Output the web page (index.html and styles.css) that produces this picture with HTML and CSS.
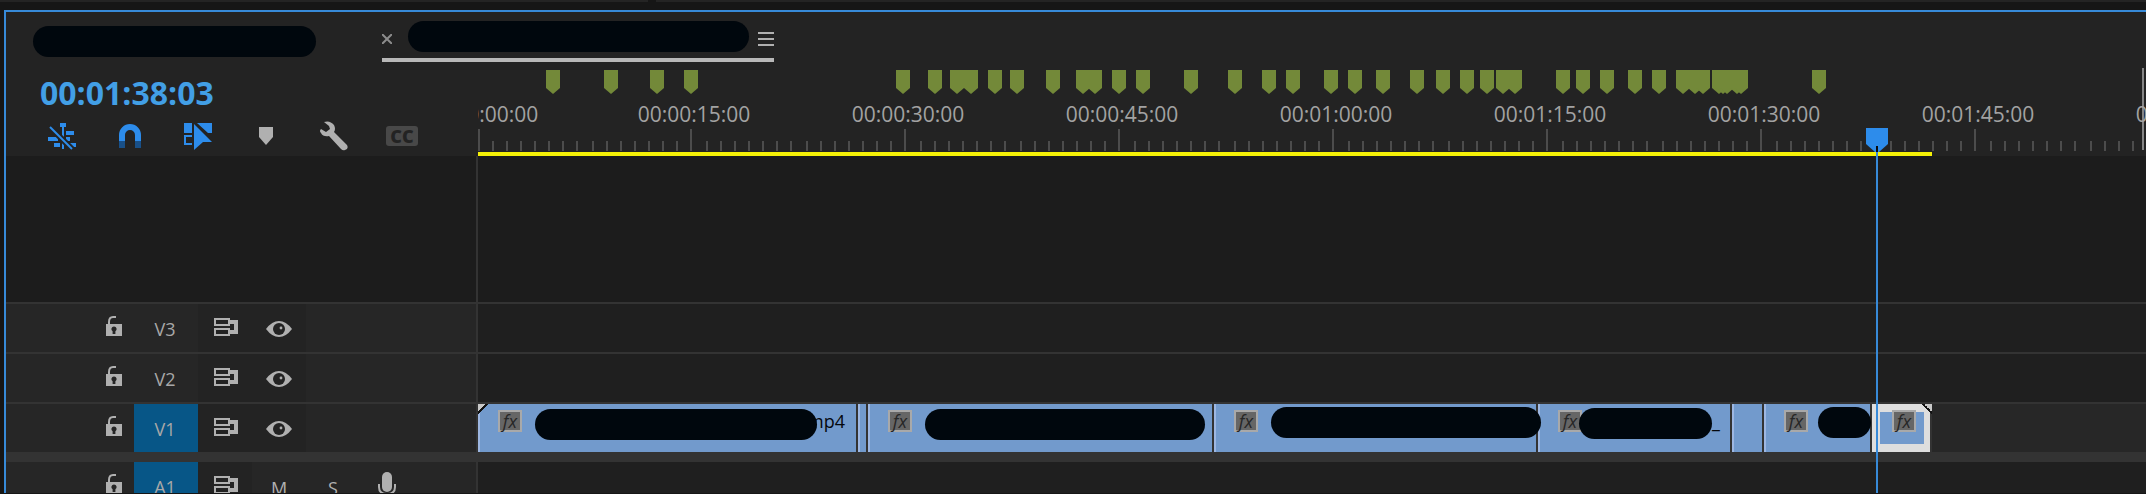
FILE: index.html
```html
<!DOCTYPE html>
<html lang="en">
<head>
  <meta charset="UTF-8" />
  <meta name="viewport" content="width=device-width, initial-scale=1.0"/>
  <title>Timeline</title>
  <link rel="stylesheet" href="styles.css">
</head>
<body>
  <!-- shared icons -->
  <svg class="icon-defs" aria-hidden="true">
    <symbol id="icon-lock" viewBox="0 0 16 20">
      <path d="M3 9V6Q3 1 7 1H10" fill="none" stroke="currentColor" stroke-width="2"/>
      <path d="M0 8h16v12H0z" fill="currentColor"/>
      <path d="M8 10.5a2.6 2.6 0 0 1 1.4 4.8V18H6.600v-2.700A2.600 2.600 0 0 1 8 10.500z" fill="#262626"/>
    </symbol>
    <symbol id="icon-sync" viewBox="0 0 24 18">
      <path d="M1 1h14v6H1zM1 11h14v6H1z" fill="none" stroke="currentColor" stroke-width="2"/>
      <path d="M16 2h8v14h-8v-4h4V6h-4z" fill="currentColor"/>
    </symbol>
    <symbol id="icon-eye" viewBox="0 0 26 16">
      <path d="M0 8Q6 0 13 0T26 8Q20 16 13 16T0 8z" fill="currentColor"/>
      <circle cx="13" cy="8" r="6" fill="#232323"/>
      <circle cx="15" cy="7" r="1.400" fill="currentColor"/>
    </symbol>
  </svg>

  <div class="dock-edge"><span></span><span></span></div>

  <main class="panel">
    <nav class="tabs">
      <a href="#" class="tab" aria-label="Sequence 1"><span class="redacted tab-name"></span></a>
      <div class="tab active">
        <button class="close" aria-label="Close">
          <svg width="10" height="10" viewBox="0 0 10 10"><path d="M0 0L10 10M10 0L0 10" stroke="currentColor" stroke-width="2"/></svg>
        </button>
        <a href="#" class="redacted tab-name" aria-label="Sequence 2"></a>
        <button class="menu" aria-label="Panel menu">
          <svg width="16" height="14" viewBox="0 0 16 14"><path d="M0 1h16M0 7h16M0 13h16" stroke="currentColor" stroke-width="2"/></svg>
        </button>
      </div>
    </nav>

    <div class="sequence">
      <section class="side">
        <div class="controls">
          <div class="timecode">00:01:38:03</div>
          <div class="toolbar">
            <button class="on" aria-label="Nest sequences">
              <svg width="28" height="28" viewBox="0 0 28 28" fill="currentColor">
                <path d="M12 1h6v4h-2v22h-2V5h-2zM18 9h8v4h-8zM0 15h10v4H0zM18 15h4v4h-4zM6 21h6v4H6zM18 21h10v4H18z"/>
                <path d="M2 5L24 27" stroke="#232323" stroke-width="6"/>
                <path d="M2 5L24 27" stroke="currentColor" stroke-width="2"/>
              </svg>
            </button>
            <button class="on" aria-label="Snap">
              <svg width="22" height="24" viewBox="0 0 22 24">
                <path d="M3 17V11a8 8 0 0 1 16 0V17" fill="none" stroke="currentColor" stroke-width="6"/>
                <path d="M0 17h6v7H0zM16 17h6v7h-6z" fill="#195088"/>
              </svg>
            </button>
            <button class="on" aria-label="Linked selection">
              <svg width="28" height="28" viewBox="0 0 28 28">
                <path d="M0 1h8v10H0zM13 1h15v10h-4z" fill="currentColor"/>
                <path d="M8 14H1v8h7" fill="none" stroke="currentColor" stroke-width="2"/>
                <path d="M10 2L28 20H19L10 28z" fill="currentColor"/>
              </svg>
            </button>
            <button aria-label="Add marker">
              <svg width="14" height="18" viewBox="0 0 14 18"><path d="M0 0h14v10L7 18 0 10z" fill="currentColor"/></svg>
            </button>
            <button aria-label="Timeline display settings">
              <svg width="28" height="30" viewBox="0 0 28 30">
                <path d="M4 1Q10-1 14 4Q16 8 14 11L27 24Q29 28 25 29Q23 30 21 28L9 15Q3 16 1 12Q-1 10 1 8L6 11L10 8L9 5z" fill="currentColor"/>
              </svg>
            </button>
            <button class="dim" aria-label="Captions"><span class="cc">CC</span></button>
          </div>
        </div>

        <div class="blank"></div>

        <div class="track-head">
          <button class="lock" aria-label="Lock V3"><svg width="16" height="20"><use href="#icon-lock"/></svg></button>
          <button class="name">V3</button>
          <button class="tool dark" aria-label="Sync lock V3"><svg width="24" height="18"><use href="#icon-sync"/></svg></button>
          <button class="tool dark" aria-label="Show V3"><svg class="eye" width="26" height="16"><use href="#icon-eye"/></svg></button>
        </div>
        <div class="track-head">
          <button class="lock" aria-label="Lock V2"><svg width="16" height="20"><use href="#icon-lock"/></svg></button>
          <button class="name">V2</button>
          <button class="tool dark" aria-label="Sync lock V2"><svg width="24" height="18"><use href="#icon-sync"/></svg></button>
          <button class="tool dark" aria-label="Show V2"><svg class="eye" width="26" height="16"><use href="#icon-eye"/></svg></button>
        </div>
        <div class="track-head">
          <button class="lock" aria-label="Lock V1"><svg width="16" height="20"><use href="#icon-lock"/></svg></button>
          <button class="name target">V1</button>
          <button class="tool dark" aria-label="Sync lock V1"><svg width="24" height="18"><use href="#icon-sync"/></svg></button>
          <button class="tool dark" aria-label="Show V1"><svg class="eye" width="26" height="16"><use href="#icon-eye"/></svg></button>
        </div>
        <div class="splitter"></div>
        <div class="track-head audio">
          <button class="lock" aria-label="Lock A1"><svg width="16" height="20"><use href="#icon-lock"/></svg></button>
          <button class="name target">A1</button>
          <button class="tool dark" aria-label="Sync lock A1"><svg width="24" height="18"><use href="#icon-sync"/></svg></button>
          <button class="tool">M</button>
          <button class="tool">S</button>
          <button class="tool" aria-label="Voice-over record">
            <svg width="18" height="28" viewBox="0 0 18 28">
              <rect x="4" y="0" width="10" height="20" rx="5" fill="currentColor"/>
              <path d="M1 12v3q0 7 8 7t8-7v-3M9 22v5M4 27h10" fill="none" stroke="currentColor" stroke-width="2"/>
            </svg>
          </button>
        </div>
      </section>

      <section class="timeline">
        <div class="ruler" id="ruler">
          <div class="work-area"></div>
          <div class="range-end"></div>
        </div>

        <div class="blank"></div>
        <div class="lane"></div>
        <div class="lane"></div>
        <div class="lane filled">
          <div class="clip first" style="width: 380px">
            <span class="fx">fx</span>
            <span class="redacted" style="width: 282px"></span>
            <span class="clip-name tucked">mp4</span>
          </div>
          <div class="clip" style="width: 10px"></div>
          <div class="clip" style="width: 346px">
            <span class="fx">fx</span>
            <span class="redacted" style="width: 280px"></span>
          </div>
          <div class="clip high" style="width: 324px">
            <span class="fx">fx</span>
            <span class="redacted" style="width: 270px"></span>
          </div>
          <div class="clip tight" style="width: 194px">
            <span class="fx">fx</span>
            <span class="redacted" style="width: 133px"></span>
            <span class="clip-name">_</span>
          </div>
          <div class="clip" style="width: 32px"></div>
          <div class="clip high" style="width: 108px">
            <span class="fx">fx</span>
            <span class="redacted" style="width: 53px"></span>
          </div>
          <div class="clip selected" style="width: 60px">
            <span class="fx">fx</span>
          </div>
        </div>
        <div class="splitter"></div>
        <div class="lane audio"></div>

        <div class="playhead">
          <svg width="22" height="24" viewBox="0 0 22 24">
            <path d="M0 0h22v16L13 24H9L0 16z" fill="#2d8ceb"/>
            <path d="M10 18h2v6h-2z" fill="#0a0a0a"/>
          </svg>
        </div>
      </section>
    </div>
  </main>

  <script>
    const ruler = document.getElementById("ruler");
    const pxPerSecond = 214 / 15;

    // marker positions, in pixels from the start of the sequence
    const markers = [
      68, 126, 172, 206, 418, 450, 472, 486, 510, 532, 568, 598, 610, 634,
      658, 706, 750, 784, 808, 846, 870, 898, 932, 958, 982, 1002, 1018,
      1030, 1078, 1098, 1122, 1150, 1174, 1198, 1210, 1218, 1234, 1238,
      1242, 1252, 1256, 1334
    ];

    function add(className, x, text) {
      const el = document.createElement("div");
      el.className = className;
      el.style.left = x + "px";
      if (text) el.textContent = text;
      ruler.appendChild(el);
    }

    function timecode(s) {
      const mm = String(Math.floor(s / 60)).padStart(2, "0");
      const ss = String(s % 60).padStart(2, "0");
      return `00:${mm}:${ss}:00`;
    }

    for (let s = 0; s <= 120; s++) {
      // ticks snap to the 2px grid
      const x = Math.max(0, 2 * Math.floor((s * pxPerSecond - 0.1) / 2));
      if (s % 15 === 0) {
        add("tick major", x);
        add("tick-label", x, timecode(s));
      } else {
        add("tick", x);
      }
    }

    markers.forEach(x => add("marker", x));
  </script>
</body>
</html>
```
FILE: styles.css
```css
* {
  box-sizing: border-box;
  margin: 0;
  padding: 0;
}

body {
  display: flex;
  flex-direction: column;
  height: 100vh;
  padding: 0 0 1px 4px;
  overflow: hidden;
  background-color: #161616;
  color: #b0b0b0;
  font-family: "Open Sans", "Noto Sans", sans-serif;
}

button {
  border: none;
  background: none;
  color: inherit;
  font: inherit;
}

svg {
  display: block;
}

.icon-defs {
  display: none;
}

.redacted {
  display: block;
  flex-shrink: 0;
  height: 31px;
  border-radius: 16px;
  background-color: #00070d;
}

/* bottom edge of the panels above */
.dock-edge {
  display: flex;
  gap: 8px;
  height: 2px;
  margin-left: -4px;
  margin-bottom: 8px;
  flex-shrink: 0;
}

.dock-edge span {
  flex: 1;
  background-color: #242424;
}

.dock-edge span:first-child {
  flex: 0 0 648px;
}

.panel {
  flex: 1;
  min-height: 0;
  overflow: hidden;
  border-top: 2px solid #378ad8;
  border-left: 2px solid #378ad8;
  background-color: #232323;
}

/* tabs */
.tabs {
  display: flex;
  gap: 66px;
  height: 50px;
  padding-left: 27px;
}

.tab {
  padding-top: 14px;
}

.tab .tab-name {
  width: 283px;
}

.tab.active {
  display: flex;
  align-items: flex-start;
  padding-top: 9px;
  border-bottom: 4px solid #b8b8b8;
}

.tab.active .tab-name {
  width: 341px;
  margin: 0 9px 0 16px;
}

.close {
  margin-top: 13px;
  color: #8c8c8c;
}

.menu {
  margin-top: 11px;
}

/* left column */
.sequence {
  display: grid;
  grid-template-columns: 472px 1fr;
}

.controls {
  height: 94px;
  padding: 15px 0 0 22px;
}

.timecode {
  padding-left: 12px;
  margin-bottom: 11px;
  color: #429fe6;
  font-size: 32px;
  font-weight: 700;
  line-height: 32px;
}

.toolbar {
  display: flex;
}

.toolbar button {
  display: flex;
  align-items: center;
  justify-content: center;
  width: 68px;
  height: 32px;
}

.toolbar .on {
  color: #2d8ceb;
}

.cc {
  width: 32px;
  height: 20px;
  border-radius: 3px;
  background-color: #484848;
  color: #232323;
  font-size: 18px;
  font-weight: 800;
  line-height: 20px;
}

.blank {
  height: 146px;
  background-color: #1c1c1c;
}

.side .blank,
.track-head {
  border-right: 2px solid #333;
}

.track-head {
  display: flex;
  height: 50px;
  padding-left: 88px;
  border-top: 2px solid #333;
  background-color: #262626;
}

.track-head button {
  display: flex;
  align-items: flex-start;
  justify-content: center;
}

.track-head .lock {
  width: 40px;
  padding-top: 12px;
}

.track-head .name {
  width: 64px;
  padding-top: 13px;
  padding-right: 2px;
  color: #a8a8a8;
  font-size: 18px;
  line-height: 24px;
}

.track-head .target {
  background-color: #075687;
}

.track-head .tool {
  width: 54px;
  padding-top: 14px;
  font-size: 18px;
  line-height: 24px;
}

.track-head .dark {
  background-color: #232323;
}

.track-head .name + .dark {
  padding-left: 2px;
}

.eye {
  margin-top: 3px;
}

.splitter {
  height: 10px;
  background-color: #333;
}

.audio.track-head,
.audio.lane {
  border-top: none;
}

.audio.track-head .tool:last-child {
  padding-top: 10px;
}

/* ruler */
.timeline {
  position: relative;
  overflow: hidden;
}

.ruler {
  position: relative;
  height: 94px;
  overflow: hidden;
}

.work-area {
  position: absolute;
  bottom: 0;
  left: 0;
  width: 1454px;
  height: 4px;
  background-color: #f5f107;
}

.range-end {
  position: absolute;
  top: 6px;
  right: 2px;
  width: 2px;
  height: 82px;
  background-color: #868686;
}

.tick {
  position: absolute;
  top: 79px;
  width: 2px;
  height: 10px;
  background-color: #4c4c4c;
}

.tick.major {
  top: 67px;
  height: 22px;
}

.tick-label {
  position: absolute;
  top: 40px;
  width: 120px;
  margin-left: -56px;
  color: #a2a2a2;
  font-size: 21px;
  line-height: 24px;
  text-align: center;
}

.marker {
  position: absolute;
  top: 8px;
  width: 14px;
  height: 24px;
  background-color: #738939;
  clip-path: polygon(0 0, 100% 0, 100% 75%, 50% 100%, 0 75%);
}

/* tracks */
.lane {
  display: flex;
  height: 50px;
  border-top: 2px solid #333;
  background-color: #1f1f1f;
}

.lane.filled {
  background-color: #272727;
}

.clip {
  position: relative;
  display: flex;
  align-items: flex-start;
  flex-shrink: 0;
  border-left: 2px solid #9db7e2;
  border-right: 2px solid #333;
  background-color: #729acc;
}

.clip .redacted {
  position: relative;
  z-index: 1;
  margin: 5px 0 0 13px;
}

.clip.high .redacted {
  margin-top: 3px;
}

.clip.high:nth-child(7) .redacted {
  margin-left: 10px;
}

.clip.tight .redacted {
  margin: 4px 0 0 -3px;
}

.fx {
  flex-shrink: 0;
  width: 24px;
  height: 22px;
  margin: 6px 0 0 18px;
  border: 2px solid #a9a9a9;
  background-color: #666;
  color: #262626;
  font-size: 18px;
  font-style: italic;
  line-height: 18px;
  text-align: center;
}

.clip-name {
  margin-top: 5px;
  color: #05080c;
  font-size: 18px;
  line-height: 24px;
}

.clip-name.tucked {
  margin-left: -10px;
}

/* folded corners mark the sequence start and end */
.clip.first::before,
.clip.selected::after {
  content: "";
  position: absolute;
  top: 0;
  width: 10px;
  height: 10px;
}

.clip.first::before {
  left: -2px;
  background: linear-gradient(135deg, #c8c8c8 40%, #111 40%, #111 52%, transparent 52%);
}

.clip.selected::after {
  right: -2px;
  background: linear-gradient(225deg, #c8c8c8 40%, #111 40%, #111 52%, transparent 52%);
}

.clip.selected {
  border-left-color: #dedede;
  background: linear-gradient(#729acc, #729acc) 6px 8px / 44px 32px no-repeat #dedede;
}

.playhead {
  position: absolute;
  top: 66px;
  bottom: 0;
  left: 1388px;
  width: 22px;
  background: linear-gradient(#378ad8, #378ad8) center / 2px 100% no-repeat;
}
```
